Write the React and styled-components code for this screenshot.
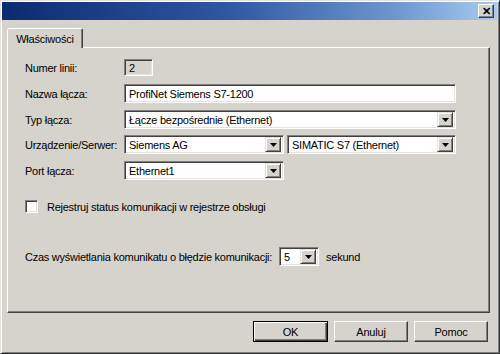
import React from "react";
import styled, { createGlobalStyle } from "styled-components";

const Global = createGlobalStyle`
  body {
    margin: 0;
    font-family: "Liberation Sans", Arial, sans-serif;
  }
`;

const face = "#d6d3cd";

const Window = styled.div`
  width: 500px;
  height: 354px;
  box-sizing: border-box;
  background: ${face};
  border: 1px solid;
  border-color: #e4e2de #303030 #303030 #e4e2de;
  box-shadow: inset 1px 1px #ffffff, inset -1px -1px #808080;
  padding: 1px 2px 2px 1px;
  display: flex;
  flex-direction: column;
  font-size: 11px;
  color: #000;
`;

const TitleBar = styled.div`
  height: 18px;
  flex: none;
  background: linear-gradient(90deg, #0c2a70 0%, #2f56a0 45%, #6f98d0 80%, #a8cbf0 100%);
  display: flex;
  align-items: center;
  justify-content: flex-end;
  padding-right: 3px;
`;

const CloseButton = styled.div`
  width: 14px;
  height: 12px;
  background: ${face};
  border: 1px solid;
  border-color: #ffffff #404040 #404040 #ffffff;
  box-shadow: inset -1px -1px #808080;
  display: flex;
  align-items: center;
  justify-content: center;
  font-size: 11px;
  font-weight: bold;
  line-height: 1;
`;

const Body = styled.div`
  padding: 8px 7px 0 5px;
  display: flex;
  flex-direction: column;
`;

const TabStrip = styled.div`
  display: flex;
  height: 19px;
  position: relative;
  z-index: 1;
`;

const Tab = styled.div`
  width: 76px;
  height: 20px;
  box-sizing: border-box;
  background: ${face};
  border: 1px solid;
  border-bottom: none;
  border-color: #ffffff #404040 transparent #ffffff;
  border-radius: 2px 2px 0 0;
  box-shadow: inset -1px 0 #808080;
  display: flex;
  align-items: center;
  justify-content: center;
  letter-spacing: -0.2px;
`;

const Panel = styled.div`
  height: 266px;
  box-sizing: border-box;
  border: 1px solid;
  border-color: #ffffff #404040 #404040 #ffffff;
  box-shadow: inset -1px -1px #808080;
  padding: 11px 16px 0 17px;
  display: flex;
  flex-direction: column;
`;

const Row = styled.div`
  display: flex;
  align-items: center;
  gap: 3px;
  margin-top: ${({ $top }) => $top || 0}px;
`;

const Label = styled.div`
  width: 96px;
  flex: none;
  letter-spacing: -0.25px;
  white-space: nowrap;
`;

const Text = styled.span`
  letter-spacing: -0.25px;
  white-space: nowrap;
`;

const Sunken = styled.div`
  width: ${({ $w }) => $w}px;
  height: ${({ $h }) => $h || 19}px;
  box-sizing: border-box;
  background: ${({ $disabled }) => ($disabled ? face : "#ffffff")};
  border: 1px solid;
  border-color: #808080 #ffffff #ffffff #808080;
  box-shadow: inset 1px 1px #404040, inset -1px -1px #e4e2de;
  display: flex;
  align-items: center;
  padding: 0 2px 0 4px;
  letter-spacing: -0.25px;
  white-space: nowrap;
  margin-left: ${({ $ml }) => $ml || 0}px;
`;

const ComboText = styled.div`
  flex: 1;
`;

const DropButton = styled.div`
  width: 16px;
  height: 15px;
  box-sizing: border-box;
  background: ${face};
  border: 1px solid;
  border-color: #e4e2de #404040 #404040 #e4e2de;
  box-shadow: inset 1px 1px #ffffff, inset -1px -1px #808080;
  display: flex;
  align-items: center;
  justify-content: center;
`;

const Arrow = () => (
  <svg width="7" height="4" viewBox="0 0 7 4">
    <path d="M0 0h7L3.5 4z" fill="#000" />
  </svg>
);

const Combo = ({ w, ml, children }) => (
  <Sunken $w={w} $ml={ml}>
    <ComboText>{children}</ComboText>
    <DropButton>
      <Arrow />
    </DropButton>
  </Sunken>
);

const CheckBox = styled.div`
  width: 13px;
  height: 13px;
  box-sizing: border-box;
  background: #fff;
  border: 1px solid;
  border-color: #808080 #ffffff #ffffff #808080;
  box-shadow: inset 1px 1px #404040, inset -1px -1px #e4e2de;
  margin-right: 6px;
`;

const Suffix = styled(Text)`
  margin-left: 4px;
`;

const Buttons = styled.div`
  display: flex;
  justify-content: flex-end;
  gap: 6px;
  margin-top: 8px;
  padding-right: 2px;
`;

const Button = styled.div`
  width: ${({ $w }) => $w}px;
  height: 21px;
  box-sizing: border-box;
  background: ${face};
  border: 1px solid;
  border-color: ${({ $default }) =>
    $default ? "#000" : "#ffffff #404040 #404040 #ffffff"};
  box-shadow: ${({ $default }) =>
    $default
      ? "inset 1px 1px #ffffff, inset -1px -1px #404040, inset -2px -2px #808080"
      : "inset -1px -1px #808080"};
  display: flex;
  align-items: center;
  justify-content: center;
  letter-spacing: -0.2px;
`;

export default function App() {
  return (
    <>
      <Global />
      <Window>
        <TitleBar>
          <CloseButton>✕</CloseButton>
        </TitleBar>
        <Body>
          <TabStrip>
            <Tab>Właściwości</Tab>
          </TabStrip>
          <Panel>
            <Row>
              <Label>Numer linii:</Label>
              <Sunken $w={29} $h={17} $disabled>
                2
              </Sunken>
            </Row>
            <Row $top={8}>
              <Label>Nazwa łącza:</Label>
              <Sunken $w={332}>ProfiNet Siemens S7-1200</Sunken>
            </Row>
            <Row $top={7}>
              <Label>Typ łącza:</Label>
              <Combo w={332}>Łącze bezpośrednie (Ethernet)</Combo>
            </Row>
            <Row $top={6}>
              <Label>Urządzenie/Serwer:</Label>
              <Combo w={160}>Siemens AG</Combo>
              <Combo w={169}>SIMATIC S7 (Ethernet)</Combo>
            </Row>
            <Row $top={7}>
              <Label>Port łącza:</Label>
              <Combo w={160}>Ethernet1</Combo>
            </Row>
            <Row $top={20}>
              <CheckBox />
              <Text>Rejestruj status komunikacji w rejestrze obsługi</Text>
            </Row>
            <Row $top={34}>
              <Text>Czas wyświetlania komunikatu o błędzie komunikacji:</Text>
              <Combo w={40} ml={4}>5</Combo>
              <Suffix>sekund</Suffix>
            </Row>
          </Panel>
          <Buttons>
            <Button $w={75} $default>
              OK
            </Button>
            <Button $w={74}>Anuluj</Button>
            <Button $w={74}>Pomoc</Button>
          </Buttons>
        </Body>
      </Window>
    </>
  );
}
